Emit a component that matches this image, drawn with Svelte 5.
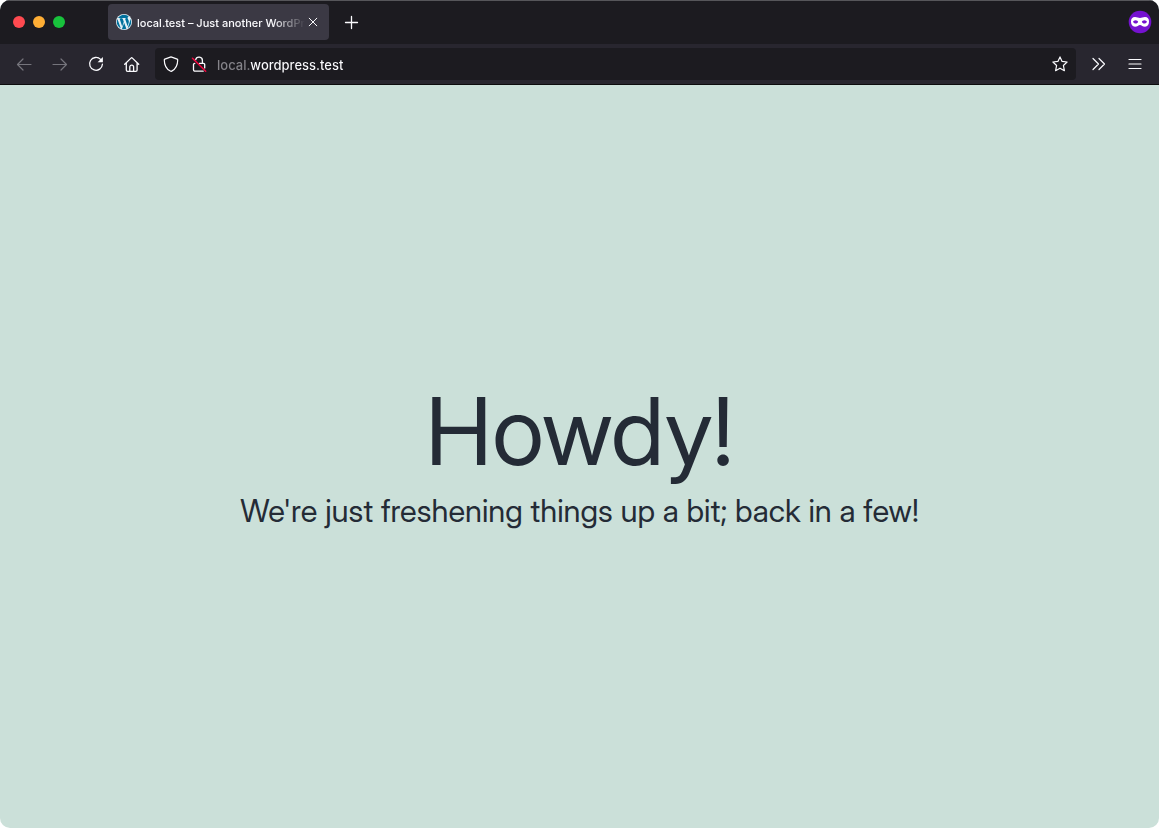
<script>
  let address = $state('local.wordpress.test');
</script>

<div class="window">
  <header>
    <div class="tabbar">
      <div class="lights">
        <button class="light red" aria-label="Close window"></button>
        <button class="light amber" aria-label="Minimize window"></button>
        <button class="light green" aria-label="Zoom window"></button>
      </div>
      <div class="tab">
        <svg class="favicon" viewBox="0 0 24 24" width="16" height="16" aria-hidden="true">
          <circle cx="12" cy="12" r="12" fill="#e4f0f6" />
          <path fill="#00709c" d="M21.469 6.825c.84 1.537 1.318 3.3 1.318 5.175 0 3.979-2.156 7.456-5.363 9.325l3.295-9.527c.615-1.54.82-2.771.82-3.864 0-.405-.026-.78-.07-1.11m-7.981.105c.647-.03 1.232-.105 1.232-.105.582-.075.514-.93-.067-.899 0 0-1.755.135-2.88.135-1.064 0-2.85-.15-2.85-.15-.585-.03-.661.855-.075.885 0 0 .54.061 1.125.09l1.68 4.605-2.37 7.08L5.354 6.9c.649-.03 1.234-.1 1.234-.1.585-.075.516-.93-.065-.896 0 0-1.746.138-2.874.138-.2 0-.438-.008-.69-.015C4.911 3.15 8.235 1.215 12 1.215c2.809 0 5.365 1.072 7.286 2.833-.046-.003-.091-.009-.141-.009-1.06 0-1.812.923-1.812 1.914 0 .89.513 1.643 1.06 2.531.411.72.89 1.643.89 2.977 0 .915-.354 1.994-.821 3.479l-1.075 3.585-3.9-11.61zM12 22.784c-1.059 0-2.081-.153-3.048-.437l3.237-9.406 3.315 9.087c.024.053.05.101.078.149-1.12.393-2.325.609-3.582.609M1.211 12c0-1.564.336-3.05.935-4.39L7.29 21.709C3.694 19.96 1.212 16.271 1.211 12" />
        </svg>
        <span class="title">local.test – Just another WordPress site</span>
        <button class="close" aria-label="Close tab">
          <svg viewBox="0 0 16 16" width="16" height="16"><path d="M4.2 4.2l7.600 7.600M11.800 4.200l-7.600 7.600" /></svg>
        </button>
      </div>
      <button class="newtab" aria-label="New tab">
        <svg viewBox="0 0 16 16" width="16" height="16"><path d="M8.5 2.5v12M2.5 8.5h12" stroke-width="1.3" /></svg>
      </button>
      <svg class="mask" viewBox="0 0 24 24" width="24" height="24" role="img" aria-label="Private browsing">
        <circle cx="12" cy="12" r="11.3" fill="#7512d0" />
        <path fill="#fff" fill-rule="evenodd" d="M7 7c2 0 3.400.9 5 .9S15 7 17 7c2.600 0 4 1.500 4 4.600 0 3.200-1.500 5.200-4 5.200-2.400 0-3.400-1.800-5-1.800s-2.600 1.800-5 1.800c-2.500 0-4-2-4-5.200C3 8.500 4.400 7 7 7zm.700 3.200c-1.500 0-2.300.9-2.700 1.700.6.8 1.500 1.500 2.700 1.500s2-.6 2.500-1.500c-.4-.9-1.200-1.700-2.500-1.700zm8.600 0c-1.300 0-2.100.8-2.500 1.700.5.9 1.300 1.500 2.500 1.500s2.100-.7 2.700-1.500c-.4-.8-1.200-1.700-2.700-1.700z" />
      </svg>
    </div>

    <nav class="toolbar" aria-label="Browser toolbar">
      <div class="actions">
        <button aria-label="Back" disabled>
          <svg viewBox="0 0 16 16" width="16" height="16"><path d="M15 8.500H1.500M7 3L1.500 8.500 7 14" stroke-width="1.200" /></svg>
        </button>
        <button aria-label="Forward" disabled>
          <svg viewBox="0 0 16 16" width="16" height="16"><path d="M1 8.500h13.500M9 3l5.500 5.500L9 14" stroke-width="1.200" /></svg>
        </button>
        <button aria-label="Reload">
          <svg viewBox="0 0 16 16" width="16" height="16">
            <path d="M12.600 3.400A6.400 6.400 0 1 0 14.400 8.200" stroke-width="1.300" />
            <path class="solid" d="M14.900 1v5.300H9.600z" />
          </svg>
        </button>
        <button aria-label="Home">
          <svg viewBox="0 0 16 16" width="16" height="16">
            <path d="M.700 8.200L7 2.100a1 1 0 0 1 1.400 0l6.300 6.100M2.300 7v7a1.300 1.300 0 0 0 1.300 1.300h8.200a1.300 1.300 0 0 0 1.300-1.300V7M5.800 15v-4a1.900 1.900 0 0 1 3.800 0v4" stroke-width="1.300" />
          </svg>
        </button>
      </div>

      <div class="urlbar">
        <button aria-label="Tracking protection">
          <svg viewBox="0 0 16 16" width="16" height="16">
            <path d="M8 .900L14.200 3.100a.8.800 0 0 1 .5.800c0 5.400-2 9-6 11.200a1.400 1.400 0 0 1-1.400 0c-4-2.200-6-5.800-6-11.200a.8.800 0 0 1 .5-.8z" stroke-width="1.200" />
          </svg>
        </button>
        <button aria-label="Connection is not secure">
          <svg viewBox="0 0 16 16" width="16" height="16">
            <path d="M4.700 3.700a3.400 3.400 0 0 1 6.700 1v2.600M8.500 7.300h4a1.200 1.200 0 0 1 1.200 1.200v3.400M3.800 7.300a1.300 1.300 0 0 0-1.300 1.300v5.200a1.400 1.400 0 0 0 1.400 1.400h8.300" stroke-width="1.300" />
            <path d="M1.500 2.200l13.200 13" class="slash" />
          </svg>
        </button>
        <input type="text" aria-label="Address" spellcheck="false" bind:value={address} />
        <button aria-label="Bookmark this page">
          <svg viewBox="0 0 16 16" width="16" height="16">
            <path d="M8 .900l2.100 4.500 5 .6-3.700 3.500 1 5.200L8 12.200l-4.400 2.500 1-5.200L.900 6l5-.6z" stroke-width="1.200" />
          </svg>
        </button>
      </div>

      <div class="actions">
        <button aria-label="More tools">
          <svg viewBox="0 0 16 16" width="16" height="16"><path d="M2 2.500L7.500 8 2 13.500M8 2.500L13.500 8 8 13.500" stroke-width="1.200" /></svg>
        </button>
        <button aria-label="Application menu">
          <svg viewBox="0 0 16 16" width="16" height="16"><path d="M2 3.500h12M2 8h12M2 12.500h12" stroke-width="1.200" /></svg>
        </button>
      </div>
    </nav>
  </header>

  <main>
    <h1>Howdy!</h1>
    <p>We're just freshening things up a bit; back in a few!</p>
  </main>
</div>

<style>
  :global(body) {
    margin: 0;
    background: #fff;
  }
  .window {
    min-height: 100vh;
    display: flex;
    flex-direction: column;
    border-radius: 10px;
    overflow: hidden;
    background: #cbe0d9;
    font-family: Inter, 'Liberation Sans', sans-serif;
  }
  button {
    display: flex;
    align-items: center;
    justify-content: center;
    padding: 0;
    border: 0;
    background: none;
    color: #fbfbfe;
  }
  button:disabled {
    color: #75747c;
  }
  svg {
    display: block;
    flex: none;
    fill: none;
    stroke-linecap: round;
    stroke-linejoin: round;
  }
  button svg {
    stroke: currentColor;
  }
  .solid {
    fill: currentColor;
    stroke: none;
  }
  .slash {
    stroke: #f0063f;
    stroke-width: 1.500;
  }
  .tabbar {
    display: flex;
    align-items: center;
    height: 44px;
    box-sizing: border-box;
    padding: 0 7px 0 13px;
    background: #1c1b20;
    box-shadow: inset 0 1px #56565a;
  }
  .lights {
    display: flex;
    gap: 8px;
    margin-right: 43px;
  }
  .light {
    width: 12px;
    height: 12px;
    border-radius: 50%;
  }
  .red {
    background: #ff4a50;
  }
  .amber {
    background: #ffae35;
  }
  .green {
    background: #18c23c;
  }
  .tab {
    display: flex;
    align-items: center;
    width: 221px;
    height: 36px;
    box-sizing: border-box;
    padding: 0 8px;
    border-radius: 4px;
    background: #3b3944;
    color: #fbfbfe;
  }
  .title {
    flex: 1;
    min-width: 0;
    margin-left: 5px;
    overflow: hidden;
    white-space: nowrap;
    font-size: 11px;
    font-weight: 500;
    line-height: 18px;
    padding-top: 2px;
    mask-image: linear-gradient(to left, transparent, #000 32px);
  }
  .newtab {
    width: 28px;
    height: 28px;
    margin-left: 8px;
  }
  .mask {
    margin-left: auto;
  }
  .toolbar {
    display: flex;
    align-items: center;
    height: 41px;
    box-sizing: border-box;
    padding: 0 6px;
    background: #28262f;
    border-bottom: 1px solid #0c0c0d;
  }
  .actions {
    display: flex;
  }
  .actions button {
    width: 36px;
    height: 32px;
  }
  .urlbar {
    flex: 1;
    min-width: 0;
    display: flex;
    align-items: center;
    height: 32px;
    margin: 0 5px;
    padding: 0 2px;
    border-radius: 4px;
    background: #1c1b20;
  }
  .urlbar button {
    flex: none;
    width: 28px;
    height: 28px;
  }
  input {
    flex: 1;
    min-width: 0;
    height: 28px;
    box-sizing: border-box;
    margin-left: 4px;
    padding: 2px 0 0;
    border: 0;
    outline: 0;
    color: transparent;
    caret-color: #fbfbfe;
    background: linear-gradient(to right, #85848a 33px, #fbfbfe 33px);
    background-clip: text;
    font: 500 13px/20px Inter, 'Liberation Sans', sans-serif;
  }
  main {
    flex: 1;
    display: flex;
    flex-direction: column;
    align-items: center;
    justify-content: center;
    color: #242b36;
    font-family: 'Inter Display', Inter, sans-serif;
    text-align: center;
  }
  h1 {
    margin: 0;
    font-size: 94px;
    font-weight: 400;
    line-height: 96px;
  }
  p {
    margin: 12px 0 0;
    font-size: 31px;
    line-height: 40px;
  }
</style>
